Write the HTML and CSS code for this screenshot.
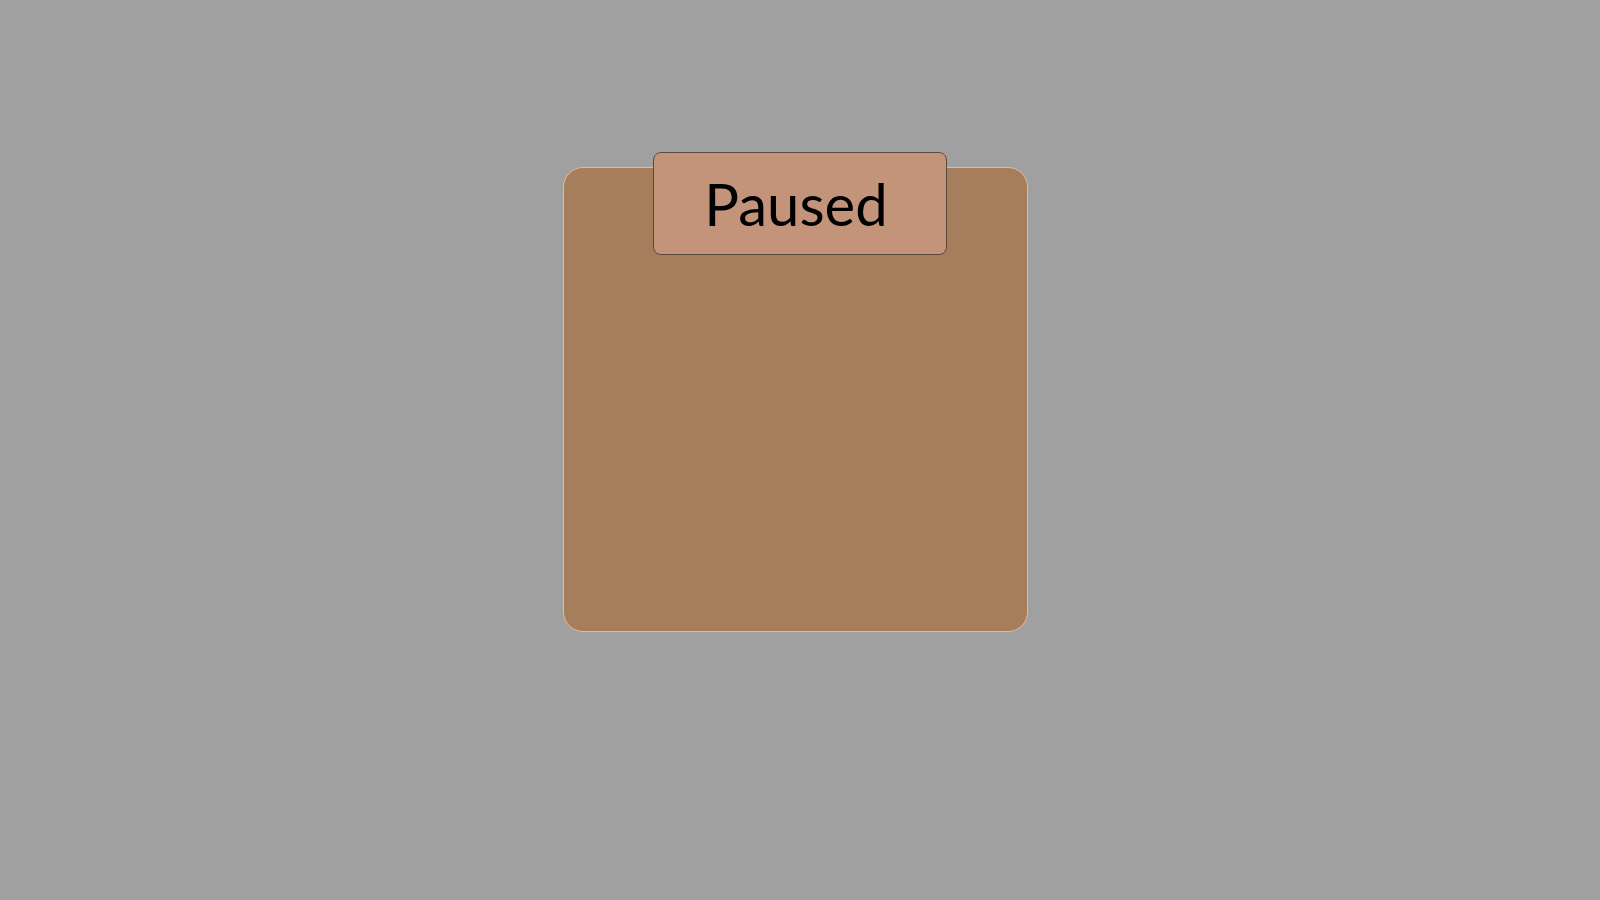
FILE: index.html
```html
<!DOCTYPE html>
<html lang="en">
  <head>
    <meta charset="UTF-8" />
    <meta name="viewport" content="width=device-width, initial-scale=1.0" />
    <title>Paused</title>
    <link rel="stylesheet" href="styles.css">
  </head>
  <body>
    <div class="stage">
      <div class="board">
        <!-- label sitting over the top edge of the board -->
        <div class="status-tab">Paused</div>
      </div>
    </div>
  </body>
</html>
```

FILE: styles.css
```css
body {
  margin: 0;
  padding: 0;
  background-color: #a0a0a0;
  font-family: Lato, "Open Sans", sans-serif;
  height: 900px;
  overflow: hidden;
}

.stage {
  padding-top: 167px;
  padding-left: 563px;
}

.board {
  position: relative;
  width: 463px;
  height: 463px;
  background: #a67e5c;
  border: 1px solid #e8b996;
  border-radius: 20px;
}

.status-tab {
  position: absolute;
  top: -16px;
  left: 89px;
  width: 284px;
  height: 101px;
  padding-right: 8px;
  background: #c4947a;
  border: 1px solid #5a4a3e;
  border-radius: 8px;
  display: flex;
  align-items: center;
  justify-content: center;
  font-size: 58px;
  color: #000;
}
```
